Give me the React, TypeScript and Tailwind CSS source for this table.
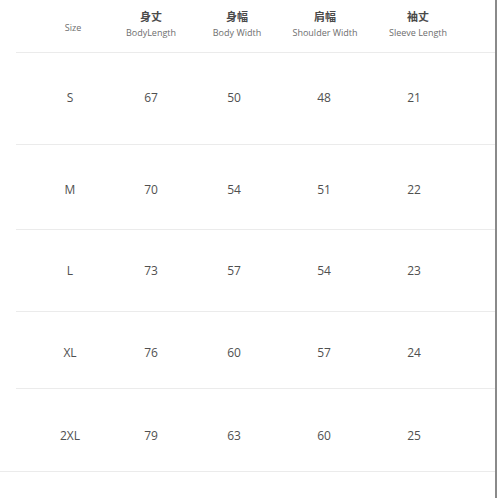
import React from "react";

const headers = [
  { zh: "", en: "Size" },
  { zh: "身丈", en: "BodyLength" },
  { zh: "身幅", en: "Body Width" },
  { zh: "肩幅", en: "Shoulder Width" },
  { zh: "袖丈", en: "Sleeve Length" },
];

const rows = [
  { cells: ["S", "67", "50", "48", "21"], cls: "h-[92px] pt-[37px] border-b border-[#ebebeb]" },
  { cells: ["M", "70", "54", "51", "22"], cls: "h-[85px] pt-[37px] border-b border-[#ebebeb]" },
  { cells: ["L", "73", "57", "54", "23"], cls: "h-[82px] pt-[33px] border-b border-[#ebebeb]" },
  { cells: ["XL", "76", "60", "57", "24"], cls: "h-[77px] pt-[33px] border-b border-[#ebebeb]" },
  { cells: ["2XL", "79", "63", "60", "25"], cls: "h-[82px] pt-[39px]" },
];

export default function App() {
  return (
    <div
      className="w-[498px] h-[498px] bg-white flex overflow-hidden"
      style={{ fontFamily: '"Open Sans", "Noto Sans CJK SC", sans-serif' }}
    >
      <div className="w-[497px] h-full border-r-2 border-[#8a8a8a] flex flex-col">
        <div className="ml-[16px] flex flex-col">
          <div className="h-[53px] border-b border-[#ebebeb] box-border">
            <div className="ml-[14px] grid grid-cols-[86px_70px_102px_74px_112px]">
              {headers.map((h, i) =>
                h.zh ? (
                  <div key={i} className="flex flex-col items-center pt-[10px]">
                    <span className="text-[11px] leading-[14px] font-bold text-[#4a4a4a]">{h.zh}</span>
                    <span className="text-[9px] leading-[12px] mt-[3px] text-[#6e6e6e]">{h.en}</span>
                  </div>
                ) : (
                  <div key={i} className="flex flex-col items-center pt-[22px]">
                    <span className="text-[9px] leading-[12px] text-[#6e6e6e]">{h.en}</span>
                  </div>
                )
              )}
            </div>
          </div>
          {rows.map((r, ri) => (
            <div key={ri} className={`box-border ${r.cls}`}>
              <div className="ml-[14px] grid grid-cols-[80px_82px_84px_96px_84px]">
                {r.cells.map((c, ci) => (
                  <span key={ci} className="text-center text-[12px] leading-[16px] text-[#505050]">
                    {c}
                  </span>
                ))}
              </div>
            </div>
          ))}
        </div>
        <div className="h-px bg-[#ebebeb] w-full" />
      </div>
    </div>
  );
}
